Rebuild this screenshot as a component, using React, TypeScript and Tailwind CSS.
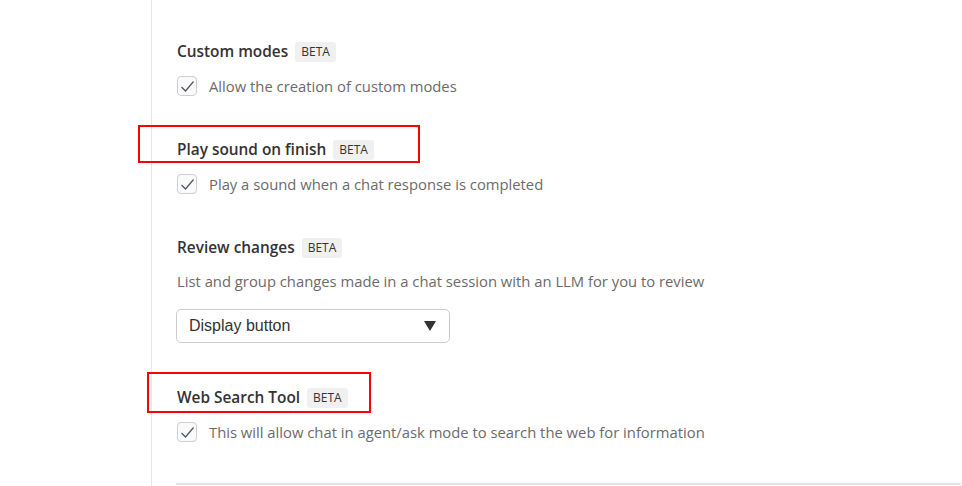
import React from 'react'

const font = { fontFamily: '"Open Sans", "Noto Sans", sans-serif' }

const Beta = () => (
  <span className="ml-[7px] inline-flex h-[20px] items-center rounded-[3px] bg-[#f0f0f0] px-[6px] text-[12px] text-[#333]">
    BETA
  </span>
)

const Heading = ({ title }: { title: string }) => (
  <div className="flex h-[24px] items-center">
    <span className="text-[15.4px] font-semibold text-[#333]">{title}</span>
    <Beta />
  </div>
)

const Check = ({ label }: { label: string }) => (
  <label className="flex h-[20px] items-center gap-[12px]">
    <span className="flex h-[20px] w-[20px] items-center justify-center rounded-[4px] border border-[#cfcfcf] bg-[#fafafa]">
      <svg width="15" height="13" viewBox="0 0 15 13" fill="none">
        <path d="M1.5 7 L5.5 11 L13.5 1.5" stroke="#4b5563" strokeWidth="1.2" />
      </svg>
    </span>
    <span className="text-[14.8px] text-[#6b6b6b]">{label}</span>
  </label>
)

export default function App() {
  return (
    <div className="relative flex h-[486px] w-[962px] overflow-hidden bg-white" style={font}>
      <div className="w-[151px] shrink-0" />
      <div className="flex-1 border-l border-[#e6e6e6] pl-[25px] pt-[40px]">
        <div className="flex flex-col gap-[42px]">
          <section className="flex flex-col gap-[12px]">
            <Heading title="Custom modes" />
            <Check label="Allow the creation of custom modes" />
          </section>
          <section className="flex flex-col gap-[12px]">
            <Heading title="Play sound on finish" />
            <Check label="Play a sound when a chat response is completed" />
          </section>
          <section className="flex flex-col">
            <Heading title="Review changes" />
            <p className="mt-[11px] h-[20px] text-[14.8px] leading-[20px] text-[#6b6b6b]">
              List and group changes made in a chat session with an LLM for you to review
            </p>
            <div
              className="-ml-[1px] mt-[18px] flex h-[34px] w-[274px] items-center justify-between rounded-[5px] border border-[#cccccc] bg-white pl-[12px] pr-[13px] text-[16px] text-[#333]"
              style={{ fontFamily: '"Liberation Sans", Arial, sans-serif' }}
            >
              <span>Display button</span>
              <svg width="12" height="10" viewBox="0 0 12 10">
                <path d="M0 0 H12 L6 10 Z" fill="#333" />
              </svg>
            </div>
          </section>
          <section className="mt-[1px] flex flex-col gap-[12px]">
            <Heading title="Web Search Tool" />
            <Check label="This will allow chat in agent/ask mode to search the web for information" />
          </section>
        </div>
        <div className="-ml-[1px] mt-[41px] h-[2px] w-full bg-[#e4e4e7]" />
      </div>

      <div className="pointer-events-none absolute left-[138px] top-[125px] h-[38px] w-[282px] border-2 border-[#ff0000]" />
      <div className="pointer-events-none absolute left-[147px] top-[372px] h-[41px] w-[224px] border-2 border-[#ff0000]" />
    </div>
  )
}
